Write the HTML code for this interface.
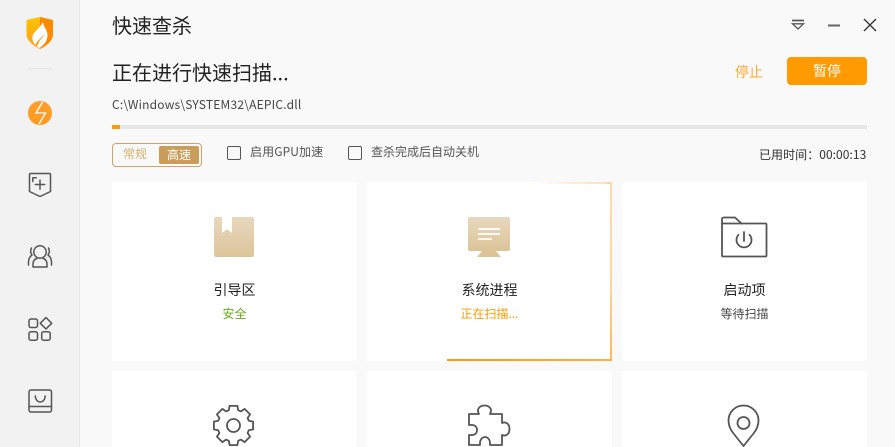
<!DOCTYPE html>
<html><head><meta charset="utf-8">
<style>
*{margin:0;padding:0;box-sizing:border-box}
html,body{width:895px;height:447px;overflow:hidden;background:#f9f9f9;font-family:"Noto Sans CJK SC","Liberation Sans",sans-serif}
.a{position:absolute}
.t{position:absolute;white-space:nowrap;line-height:1}
.card{position:absolute;background:#fff;width:245px}
.ct{position:absolute;left:0;width:100%;text-align:center;line-height:1;white-space:nowrap}
svg{position:absolute;overflow:visible}
.cb{position:absolute;width:14px;height:14px;border:1.3px solid #555;border-radius:2px;top:146px}
</style></head><body>
<div class="a" style="left:0;top:0;width:80px;height:447px;background:#f2f2f2;border-right:1px solid #e8e8e8"></div>

<svg style="left:0;top:0" width="80" height="447" fill="none">
<defs>
<linearGradient id="o" x1="0" y1="0" x2="0" y2="1"><stop offset="0" stop-color="#ff9f2e"/><stop offset="1" stop-color="#ff9a1f"/></linearGradient>
<linearGradient id="s" x1="0" y1="0" x2="0" y2="1"><stop offset="0" stop-color="#ffc400"/><stop offset="1" stop-color="#ff9d14"/></linearGradient>
</defs>
<path d="M40 17L53 20V34C53 41 46 46 40 49C34 46 26.500 41 26.500 34V20Z" fill="url(#s)"/>
<path d="M40 17L53 20V34C53 41 46 46 40 49Z" fill="#ff8a00"/>
<path d="M43 22C43 27 47.500 29 47.500 35C47.500 41 44 45 39.500 48C35 46 31.500 41 32.500 36C33.500 32 39 29 43 22Z" fill="#fff"/>
<path d="M44 33C44 37 37 39 35 46.500C37 46.500 38 45 39 42C40 39 44 38 44 33Z" fill="#ff9d14"/>
<rect x="28" y="68" width="24" height="1" fill="#e6e6e6"/>
<circle cx="40" cy="113" r="12" fill="url(#o)"/>
<path d="M42.500 102L36 113H45.500L39 124" stroke="#fff" stroke-width="1.300"/>
<g stroke="#555" stroke-width="1.500" stroke-linecap="round" stroke-linejoin="round">
<path d="M30.500 173.500H49.500Q50.500 173.500 50.500 174.500V191.500L40 196.500L29.500 191.500V174.500Q29.500 173.500 30.500 173.500Z"/>
<path d="M32.800 181.500V177.800H36.200"/>
<path d="M40 180V189M35.300 184.500H44.700"/>
<circle cx="40" cy="252" r="6.200"/>
<path d="M33 267V264C33 261 35 259 37.300 258M47 267V264C47 261 45 259 42.700 258M33 267H47"/>
<path d="M31.500 248C30 251 30.500 253 32 255C30 256.500 28.500 259 28.500 262V265M48.500 248C50 251 49.500 253 48 255C50 256.500 51.500 259 51.500 262V265"/>
<rect x="29" y="319" width="8.500" height="8.500" rx="2"/>
<path d="M46 317.500L51.700 323.300L46 329L40.300 323.300Z"/>
<rect x="29" y="331.700" width="8.500" height="8.500" rx="2"/>
<rect x="41.700" y="331.700" width="8.500" height="8.500" rx="2"/>
<rect x="29" y="390" width="22.500" height="22" rx="2"/>
<path d="M29 406.500H51.500M35.300 396C35.800 404 44.700 404 45.200 396"/>
</g>
</svg>

<div class="t" style="left:112px;top:15px;font-size:20px;color:#222">快速查杀</div>
<svg style="left:790px;top:18px" width="80" height="18" fill="none" stroke="#555">
<path d="M2 2.500H14" stroke-width="1.700"/><path d="M2.500 5.800H13.500L8 11Z" stroke-width="1.300"/>
<path d="M38 7.500H50" stroke-width="2" stroke="#666"/>
<path d="M74 1L86 13M86 1L74 13" stroke="#333" stroke-width="1.300"/>
</svg>

<div class="t" style="left:112px;top:62px;font-size:20px;color:#222">正在进行快速扫描...</div>
<div class="t" style="left:735px;top:65px;font-size:14px;color:#ffa733">停止</div>
<div class="a" style="left:787px;top:57px;width:80px;height:28px;background:#ff9a00;border-radius:4px;color:#fff;font-size:14px;line-height:29px;text-align:center">暂停</div>
<div class="t" style="left:112px;top:99px;font-size:12px;color:#444;letter-spacing:.2px">C:\Windows\SYSTEM32\AEPIC.dll</div>
<div class="a" style="left:112px;top:125px;width:755px;height:4px;background:#e6e6e6"></div>
<div class="a" style="left:112px;top:125px;width:8px;height:4px;background:#ff9a00"></div>

<div class="a" style="left:112px;top:143px;width:90px;height:24px;border:1px solid #cfa468;border-radius:4px"></div>
<div class="t" style="left:123px;top:148px;font-size:12px;color:#d8ae6c">常规</div>
<div class="a" style="left:159px;top:146px;width:40px;height:18px;background:#c99d5c;border-radius:2px;color:#fff;font-size:12px;line-height:18px;text-align:center">高速</div>
<div class="cb" style="left:227px"></div>
<div class="t" style="left:250px;top:146px;font-size:12px;color:#555;letter-spacing:.1px">启用GPU加速</div>
<div class="cb" style="left:348px"></div>
<div class="t" style="left:371px;top:146px;font-size:12px;color:#555">查杀完成后自动关机</div>
<div class="t" style="left:759px;top:149px;font-size:12px;color:#333;letter-spacing:.05px">已用时间：00:00:13</div>

<div class="card" style="left:112px;top:182px;height:179px">
<div class="ct" style="top:101px;font-size:14px;color:#222">引导区</div>
<div class="ct" style="top:126px;font-size:12px;color:#6aa91c">安全</div>
</div>
<div class="card" style="left:367px;top:182px;height:179px">
<div class="a" style="left:164px;top:0;width:81px;height:2px;background:linear-gradient(90deg,#fff,#ffe3bb 90%,#ffc880)"></div>
<div class="a" style="right:0;top:0;width:2px;height:179px;background:linear-gradient(180deg,#ffdcb0,#ffd29a 60%,#ffb655)"></div>
<div class="a" style="left:80px;bottom:0;width:165px;height:2px;background:linear-gradient(90deg,#ff9a00,#ffb040)"></div>
<div class="ct" style="top:101px;font-size:14px;color:#222">系统进程</div>
<div class="ct" style="top:126px;font-size:12px;color:#ff9a00">正在扫描...</div>
</div>
<div class="card" style="left:622px;top:182px;height:179px">
<div class="ct" style="top:101px;font-size:14px;color:#222">启动项</div>
<div class="ct" style="top:126px;font-size:12px;color:#444">等待扫描</div>
</div>
<div class="card" style="left:112px;top:371px;height:76px"></div>
<div class="card" style="left:367px;top:371px;height:76px"></div>
<div class="card" style="left:622px;top:371px;height:76px"></div>

<svg style="left:0;top:0" width="895" height="447" fill="none">
<defs><linearGradient id="g" x1="0" y1="0" x2="0" y2="1"><stop offset="0" stop-color="#e8d8bf"/><stop offset="1" stop-color="#dcc498"/></linearGradient></defs>
<path d="M216 217H222V233L227 229L232 233V217H252C253 217 254 218 254 219V255C254 256 253 257 252 257H216C215 257 214 256 214 255V219C214 218 215 217 216 217Z" fill="url(#g)"/>
<rect x="468" y="217" width="42" height="34" rx="2" fill="url(#g)"/>
<path d="M477 257L482 251H496L501 257Z" fill="#dcc498"/>
<path d="M478 229H500M478 234H500M478 239H492" stroke="#fff" stroke-width="1.800"/>
<g stroke="#555" stroke-width="1.800" stroke-linejoin="round" stroke-linecap="round">
<path d="M722 223.500V219C722 218 723 217.500 724 217.500H735L741.500 223.500H765.500C766.200 223.500 766.500 224 766.500 224.500V255.500C766.500 256.200 766.200 256.500 765.500 256.500H723C722.300 256.500 722 256.200 722 255.500Z"/>
<path d="M722 223.500H741.500"/>
<path d="M744 232V241"/>
<path d="M738.500 234.800A7.500 7.500 0 1 0 749.500 234.800"/>
<circle cx="233.500" cy="425.500" r="6.500"/>
<path transform="translate(233.500,425.500)" d="M-4.700 -15.300L-3.900 -19.600H3.900L4.700 -15.300L7.500 -14.100L11.100 -16.600L16.600 -11.100L14.100 -7.500L15.300 -4.700L19.600 -3.900V3.900L15.300 4.700L14.100 7.500L16.600 11.100L11.100 16.600L7.500 14.100L4.700 15.300L3.900 19.600H-3.900L-4.700 15.300L-7.500 14.100L-11.100 16.600L-16.600 11.100L-14.100 7.500L-15.300 4.700L-19.600 3.900V-3.900L-15.300 -4.700L-14.100 -7.500L-16.600 -11.100L-11.100 -16.600L-7.500 -14.100Z"/>
<path d="M469 414H479C476 409 480 405.500 484.500 405.500C489 405.500 493 409 490 414H502V423C507 421 509.500 425 509.500 429C509.500 433 507 437 502 435V445H490V443C490 439 487 437 485 437C483 437 480 439 480 443V445H469V435H472C475 435 477 433 477 430C477 427 475 425 472 425H469Z"/>
<circle cx="743.500" cy="423" r="6"/>
<path d="M743.500 405.500C751.800 405.500 758.500 412.200 758.500 420.500C758.500 427 755.500 431 753.500 433.500L743.500 446L733.500 433.500C731.500 431 728.500 427 728.500 420.500C728.500 412.200 735.200 405.500 743.500 405.500Z"/>
</g>
</svg>
</body></html>
